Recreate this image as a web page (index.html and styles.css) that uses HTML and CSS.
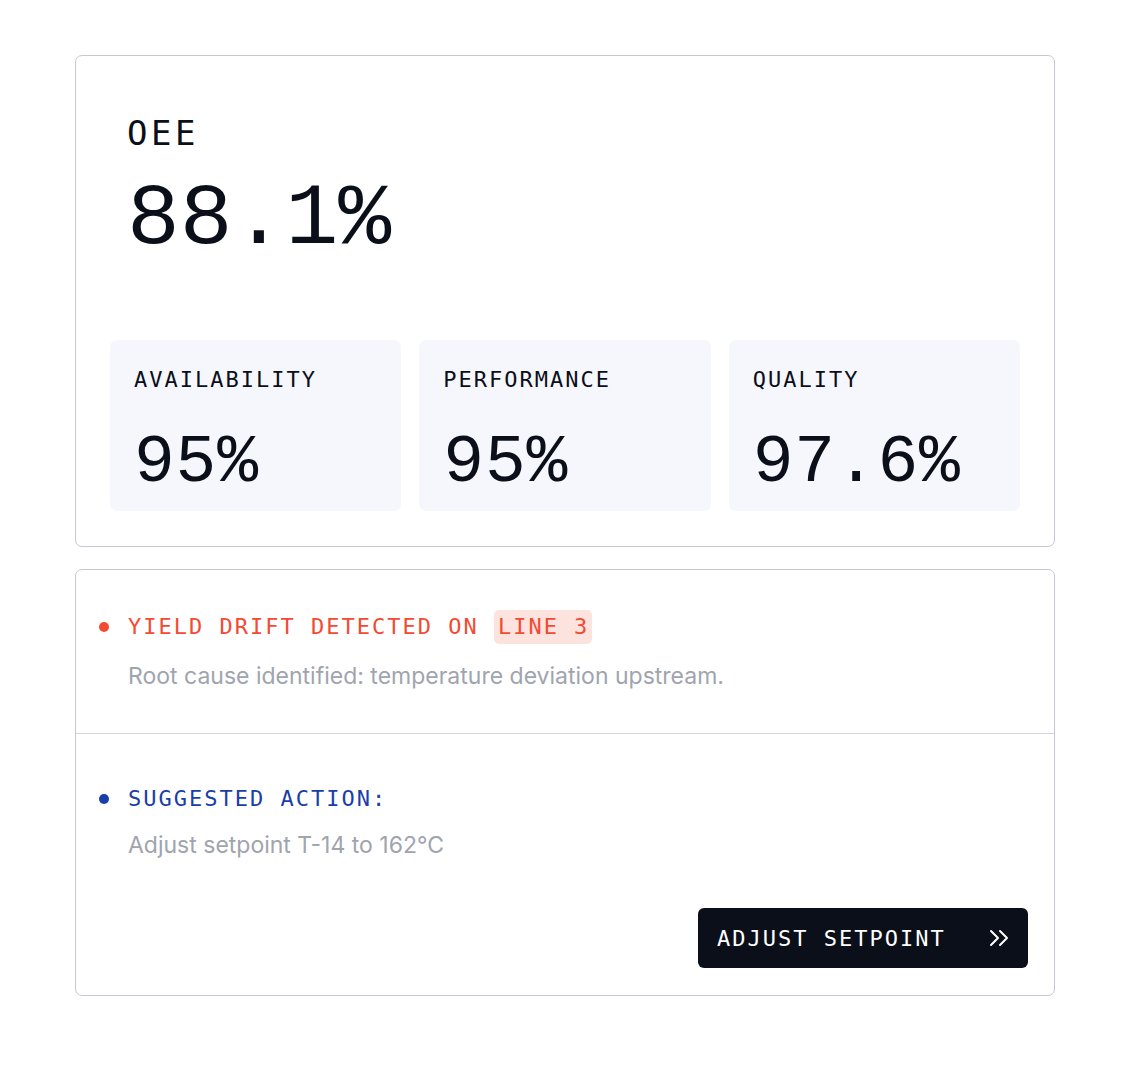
FILE: index.html
```html
<!DOCTYPE html>
<html lang="en">
<head>
<meta charset="utf-8">
<title>OEE</title>
<link rel="stylesheet" href="styles.css">
</head>
<body>
<main class="page">
  <section class="card oee-card">
    <div class="oee-head">
      <div class="oee-label">OEE</div>
      <div class="oee-value">88.1%</div>
    </div>
    <div class="tiles">
      <div class="tile">
        <div class="tile-label">AVAILABILITY</div>
        <div class="tile-value">95%</div>
      </div>
      <div class="tile">
        <div class="tile-label">PERFORMANCE</div>
        <div class="tile-value">95%</div>
      </div>
      <div class="tile">
        <div class="tile-label">QUALITY</div>
        <div class="tile-value">97.6%</div>
      </div>
    </div>
  </section>

  <section class="card alert-card">
    <div class="alert-section">
      <div class="alert-title red"><span class="dot dot-red"></span>YIELD DRIFT DETECTED ON <span class="badge">LINE 3</span></div>
      <p class="alert-text">Root cause identified: temperature deviation upstream.</p>
    </div>
    <div class="alert-section action-section">
      <div class="alert-title blue"><span class="dot dot-blue"></span>SUGGESTED ACTION:</div>
      <p class="alert-text action-text">Adjust setpoint T-14 to 162°C</p>
      <div class="actions">
        <button class="btn" type="button">ADJUST SETPOINT
          <svg class="chev" width="22" height="18" viewBox="0 0 22 18" fill="none" stroke="#fff" stroke-width="2" stroke-linecap="round" stroke-linejoin="round"><path d="M2 2l7 7-7 7"/><path d="M11 2l7 7-7 7"/></svg>
        </button>
      </div>
    </div>
  </section>
</main>
</body>
</html>
```

FILE: styles.css
```css
* { box-sizing: border-box; }
html, body { margin: 0; padding: 0; background: #ffffff; }
body { font-family: "DejaVu Sans Mono", "Liberation Mono", monospace; color: #0b0f19; }

.page {
  width: 980px;
  margin: 55px 0 0 75px;
  display: flex;
  flex-direction: column;
  gap: 22px;
}

.card {
  border: 1.5px solid #c6c8d1;
  border-radius: 7px;
  background: #fff;
}

.oee-card { padding: 34px 34px 35px 34px; }

.oee-head { padding: 23px 17px 0 17px; }
.oee-label {
  font-size: 34px;
  letter-spacing: 3.5px;
  line-height: 40px;
  color: #0b0f19;
}
.oee-value {
  font-family: "Liberation Mono", "DejaVu Sans Mono", monospace;
  font-size: 88px;
  line-height: 100px;
  color: #0b0f19;
  margin-top: 17px;
}

.tiles {
  margin-top: 70px;
  display: grid;
  grid-template-columns: repeat(3, 1fr);
  gap: 18px;
}
.tile {
  background: #f6f7fc;
  border-radius: 7px;
  height: 171px;
  padding: 26px 24px 0 24px;
}
.tile-label {
  font-size: 22px;
  letter-spacing: 2px;
  line-height: 28px;
}
.tile-value {
  font-family: "Liberation Mono", "DejaVu Sans Mono", monospace;
  font-size: 68px;
  letter-spacing: 0.8px;
  line-height: 76px;
  margin-top: 31px;
}

.alert-section { padding: 40px 22px 0 23px; }
.alert-section:first-child { height: 164px; border-bottom: 1.5px solid #d3d5e4; }
.action-section { padding-top: 48px; padding-bottom: 27px; }

.alert-title {
  display: flex;
  align-items: center;
  font-size: 22px;
  letter-spacing: 2px;
  line-height: 34px;
  white-space: pre;
}
.red { color: #f24a33; }
.blue { color: #1a3ea8; }

.dot {
  width: 10px;
  height: 10px;
  border-radius: 50%;
  margin-right: 19px;
  flex: none;
}
.dot-red { background: #f24a33; }
.dot-blue { background: #1a3ea8; }

.badge {
  background: #fde3de;
  border-radius: 5px;
  padding: 0 3px 0 4px;
}

.alert-text {
  margin: 19px 0 0 29px;
  font-family: Inter, "Liberation Sans", Arial, sans-serif;
  font-size: 23px;
  line-height: 26px;
  color: #a0a4ae;
}
.action-text { margin-top: 16px; }

.actions {
  display: flex;
  justify-content: flex-end;
  margin-top: 50px;
  padding-right: 4px;
}
.btn {
  display: flex;
  align-items: center;
  justify-content: space-between;
  width: 330px;
  height: 60px;
  background: #0b0f19;
  color: #fff;
  border: none;
  border-radius: 6px;
  padding: 0 17px 0 19px;
  font-family: "DejaVu Sans Mono", "Liberation Mono", monospace;
  font-size: 22px;
  letter-spacing: 2px;
}
.chev { display: block; }
```
